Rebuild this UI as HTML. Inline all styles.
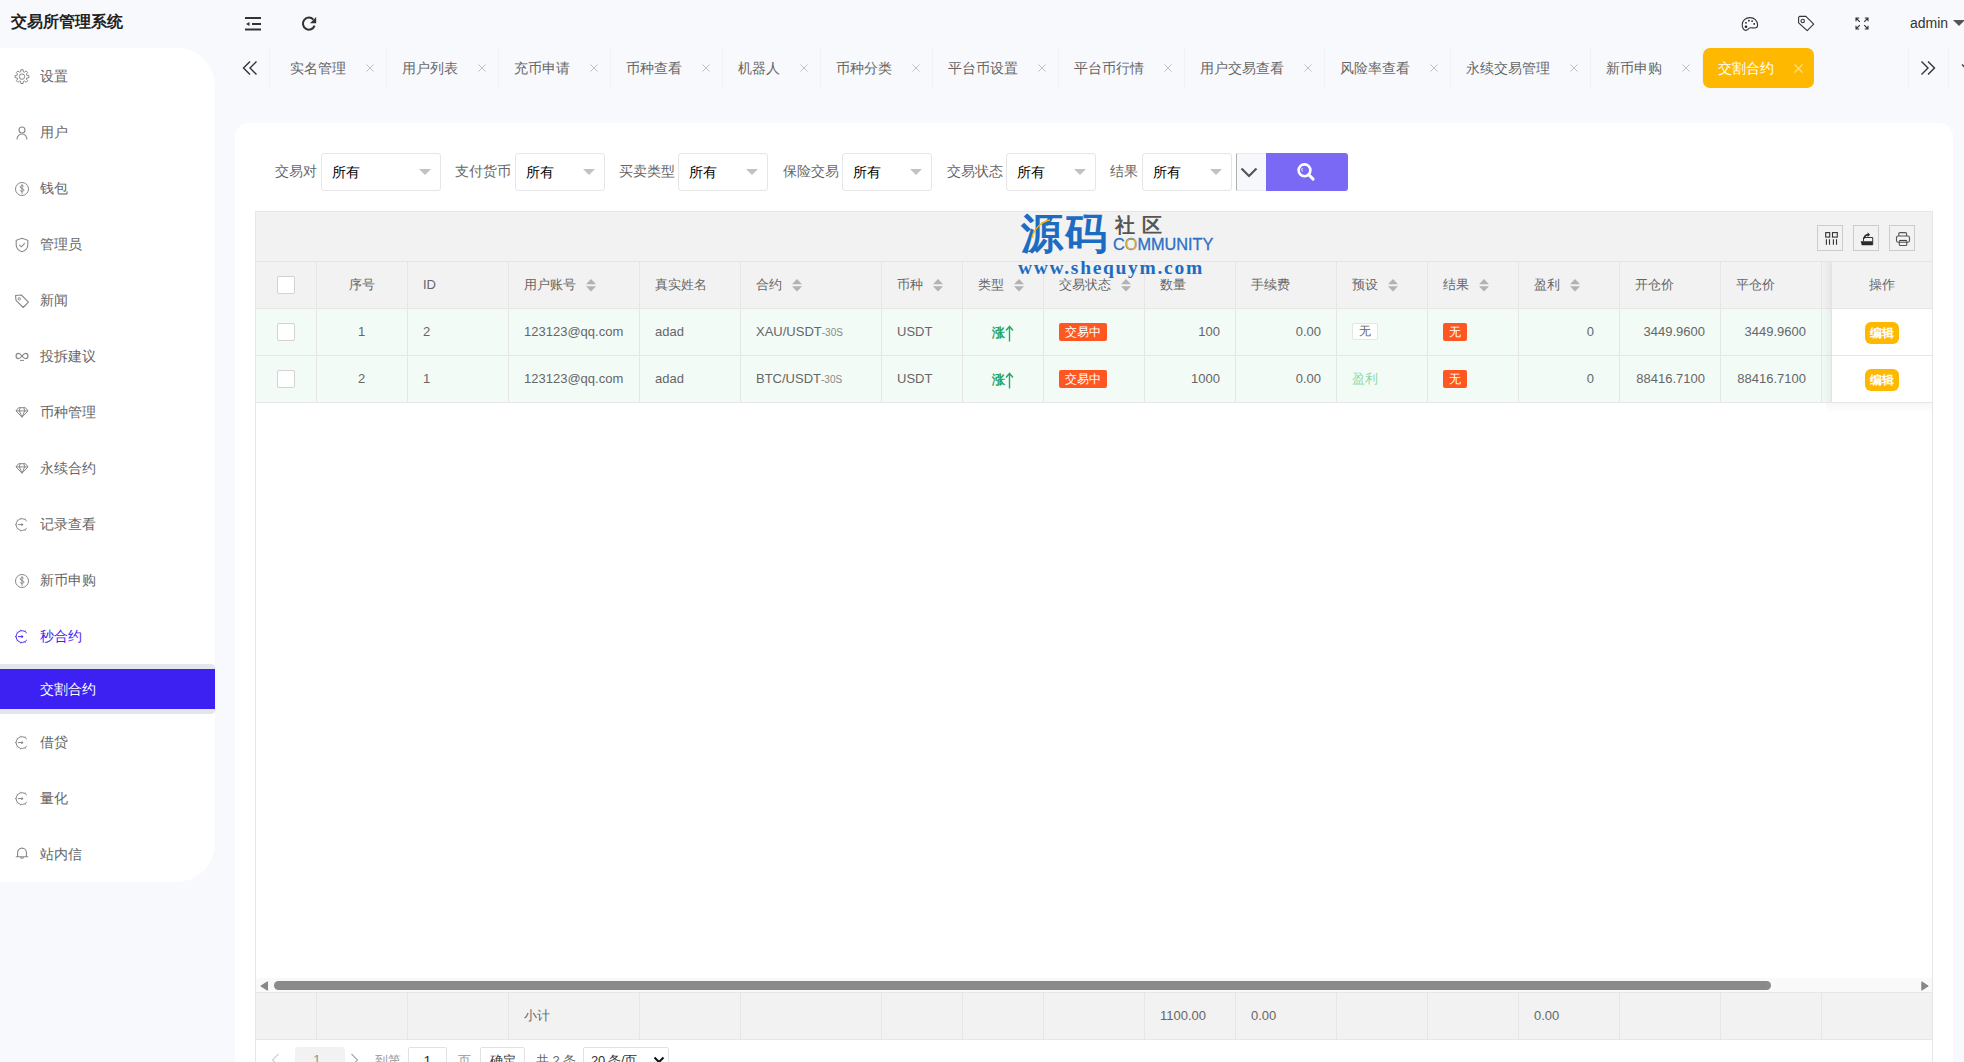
<!DOCTYPE html><html><head><meta charset="utf-8"><style>
*{margin:0;padding:0;box-sizing:border-box}
html,body{width:1964px;height:1062px;overflow:hidden;background:#f8f9fd;font-family:"Liberation Sans",sans-serif;font-size:14px;color:#666}
.a{position:absolute;white-space:nowrap}
#side{position:absolute;left:0;top:48px;width:215px;height:834px;background:#fff;border-radius:0 38px 38px 0}
.mi{position:absolute;left:40px;font-size:14px;color:#666;line-height:20px;white-space:nowrap}
.ic{position:absolute;left:13px}
.tab{position:absolute;top:58px;line-height:20px;color:#666;font-size:14px;white-space:nowrap}
.tx{position:absolute;top:64px}
.sep{position:absolute;top:48px;width:1px;height:40px;background:#f2f2f5}
#card{position:absolute;left:235px;top:123px;width:1718px;height:1000px;background:#fff;border-radius:14px}
.lbl{position:absolute;top:161px;line-height:20px;color:#666;white-space:nowrap}
.sel{position:absolute;top:153px;height:38px;border:1px solid #e6e6e6;border-radius:3px;background:#fff}
.sel span{position:absolute;left:10px;top:8px;line-height:20px;color:#000}
.sel i{position:absolute;top:15px;width:0;height:0;border-left:6px solid transparent;border-right:6px solid transparent;border-top:6px solid #c2c2c2}
.vl{position:absolute;width:1px;background:#e6e6e6}
.hl{position:absolute;height:1px;background:#e6e6e6}
.th{position:absolute;top:275px;line-height:20px;color:#666;white-space:nowrap;font-size:13px}
.td{position:absolute;line-height:22px;color:#666;white-space:nowrap;font-size:13px}
.srt{position:absolute;top:279px}
.cb{position:absolute;width:18px;height:18px;border:1px solid #d2d2d2;background:#fff;border-radius:2px}
.bdg{position:absolute;height:18px;line-height:18px;font-size:12px;color:#fff;background:#FF5722;border-radius:2px;text-align:center}
</style></head><body>
<div class="a" style="left:11px;top:12px;font-size:16px;font-weight:bold;color:#222;line-height:20px">交易所管理系统</div>
<svg class="a" style="left:244px;top:16px" width="18" height="16" viewBox="0 0 18 16"><path d="M1 2h16M8 8h9M1 13.5h16" stroke="#333" stroke-width="1.8"/><path d="M2 8l3.5-2v4z" fill="#333"/></svg>
<svg class="a" style="left:301px;top:16px" width="16" height="16" viewBox="0 0 16 16"><path d="M13.6 9.6A6 6 0 1 1 12.4 3.6" fill="none" stroke="#333" stroke-width="2"/><path d="M15.2 1v6.2H9z" fill="#333"/></svg>
<svg class="a" style="left:1741px;top:16px" width="18" height="16" viewBox="0 0 18 16"><path d="M9 1.6C4.6 1.6 1.2 4.8 1.2 8.8c0 3.4 1.8 5.6 3.6 5.6 1.8 0 2.4-1.8 3.8-2.4 1.4-.6 2.9 0 4.9 0 2.1 0 3.1-1 3.1-3C16.6 4.8 13.2 1.6 9 1.6z" fill="none" stroke="#333" stroke-width="1.1"/><circle cx="5" cy="10.8" r="1.3" fill="#222"/><circle cx="5" cy="6.8" r=".9" fill="#222"/><circle cx="7.9" cy="4.7" r=".9" fill="#222"/><circle cx="11.1" cy="5.05" r=".9" fill="#222"/><circle cx="13.2" cy="7.9" r=".9" fill="#222"/></svg>
<svg class="a" style="left:1797px;top:15px" width="18" height="18" viewBox="0 0 18 18"><path d="M1.6 2.4l1-1h6.3l7.8 7.8-6.5 6.5L1.6 7.9z" fill="none" stroke="#333" stroke-width="1.1" stroke-linejoin="round"/><circle cx="5.7" cy="6" r="1.7" fill="none" stroke="#333" stroke-width="1.1"/></svg>
<svg class="a" style="left:1855px;top:17px" width="14" height="13" viewBox="0 0 14 13"><g fill="none" stroke="#333" stroke-width="1.1"><path d="M1 1l3.8 3.8M1 4.2V1h3.2M13 1L9.2 4.8M9.8 1H13v3.2M1 12l3.8-3.8M1 8.8V12h3.2M13 12L9.2 8.2M13 8.8V12H9.8"/></g></svg>
<div class="a" style="left:1910px;top:14px;font-size:14px;color:#333;line-height:18px">admin</div>
<div class="a" style="left:1953px;top:20px;width:0;height:0;border-left:6px solid transparent;border-right:6px solid transparent;border-top:6px solid #555"></div>
<div id="side"></div>
<svg class="ic" style="top:68px" width="18" height="18" viewBox="0 0 18 18"><path d="M7.62 3.79 L7.90 1.69 L10.10 1.69 L10.38 3.79 L11.42 4.23 L13.11 2.94 L14.66 4.49 L13.37 6.18 L13.81 7.22 L15.91 7.50 L15.91 9.70 L13.81 9.98 L13.37 11.02 L14.66 12.71 L13.11 14.26 L11.42 12.97 L10.38 13.41 L10.10 15.51 L7.90 15.51 L7.62 13.41 L6.58 12.97 L4.89 14.26 L3.34 12.71 L4.63 11.02 L4.19 9.98 L2.09 9.70 L2.09 7.50 L4.19 7.22 L4.63 6.18 L3.34 4.49 L4.89 2.94 L6.58 4.23z" fill="none" stroke="#888" stroke-width="1" stroke-linejoin="round"/><circle cx="9" cy="8.6" r="2.7" fill="none" stroke="#888" stroke-width="1"/></svg>
<div class="mi" style="top:66px;color:#666">设置</div>
<svg class="ic" style="top:124px" width="18" height="18" viewBox="0 0 18 18"><circle cx="9" cy="6" r="3" fill="none" stroke="#888" stroke-width="1.1"/><path d="M4 15.5c0-3 2.2-5.5 5-5.5s5 2.5 5 5.5" fill="none" stroke="#888" stroke-width="1.1"/></svg>
<div class="mi" style="top:122px;color:#666">用户</div>
<svg class="ic" style="top:180px" width="18" height="18" viewBox="0 0 18 18"><circle cx="9" cy="9" r="6.5" fill="none" stroke="#888" stroke-width="1"/><path d="M10.8 6.6c-.3-.7-1-1-1.8-1-1 0-1.8.6-1.8 1.4 0 1.8 3.7 1 3.7 2.9 0 .9-.8 1.5-1.9 1.5-.9 0-1.7-.4-2-1.2M9 4.3v9.4" fill="none" stroke="#888" stroke-width="1"/></svg>
<div class="mi" style="top:178px;color:#666">钱包</div>
<svg class="ic" style="top:236px" width="18" height="18" viewBox="0 0 18 18"><path d="M9 2.3l5.8 2v4.6c0 3.4-2.6 5.6-5.8 6.8-3.2-1.2-5.8-3.4-5.8-6.8V4.3z" fill="none" stroke="#888" stroke-width="1.1"/><path d="M6.3 8.8l2 2 3.6-3.6" fill="none" stroke="#888" stroke-width="1.1"/></svg>
<div class="mi" style="top:234px;color:#666">管理员</div>
<svg class="ic" style="top:292px" width="18" height="18" viewBox="0 0 18 18"><path d="M2.5 3.5l5.8-.5 7.2 7.2-5.3 5.3-7.2-7.2z" fill="none" stroke="#888" stroke-width="1.1" stroke-linejoin="round"/><circle cx="6.3" cy="6.8" r="1.2" fill="none" stroke="#888" stroke-width="1"/></svg>
<div class="mi" style="top:290px;color:#666">新闻</div>
<svg class="ic" style="top:348px" width="18" height="18" viewBox="0 0 18 18"><path d="M9 8C7.8 6.5 6.8 5.3 5.5 5.3 4.1 5.3 3.1 6.5 3.1 8s1 2.7 2.4 2.7c1.3 0 2.3-1.2 3.5-2.7 1.2-1.5 2.2-2.7 3.5-2.7 1.4 0 2.4 1.2 2.4 2.7s-1 2.7-2.4 2.7C11.2 10.7 10.2 9.5 9 8z" fill="none" stroke="#888" stroke-width="1.2"/><path d="M7 12.4h4" stroke="#888" stroke-width="1"/></svg>
<div class="mi" style="top:346px;color:#666">投拆建议</div>
<svg class="ic" style="top:404px" width="18" height="18" viewBox="0 0 18 18"><path d="M5.6 3.7h6.8l2.6 3.2-6 6.3-6-6.3z M3 6.9h12M7.2 3.7L6.3 6.9 9 13.2l2.7-6.3-.9-3.2" fill="none" stroke="#888" stroke-width="1" stroke-linejoin="round"/></svg>
<div class="mi" style="top:402px;color:#666">币种管理</div>
<svg class="ic" style="top:460px" width="18" height="18" viewBox="0 0 18 18"><path d="M5.6 3.7h6.8l2.6 3.2-6 6.3-6-6.3z M3 6.9h12M7.2 3.7L6.3 6.9 9 13.2l2.7-6.3-.9-3.2" fill="none" stroke="#888" stroke-width="1" stroke-linejoin="round"/></svg>
<div class="mi" style="top:458px;color:#666">永续合约</div>
<svg class="ic" style="top:516px" width="18" height="18" viewBox="0 0 18 18"><path d="M13.83 5.22A5.9 5.9 0 1 0 13.83 11.98" fill="none" stroke="#888" stroke-width="1"/><path d="M11.95 3.49L12.45 2.62M7.98 2.79L7.80 1.80M4.48 4.81L3.71 4.16M3.10 8.60L2.10 8.60M4.48 12.39L3.71 13.04M7.98 14.41L7.80 15.40M11.95 13.71L12.45 14.58" stroke="#888" stroke-width="1"/><circle cx="9" cy="8.6" r="1.2" fill="#888"/><path d="M4.9 8.6H9" stroke="#888" stroke-width="1"/></svg>
<div class="mi" style="top:514px;color:#666">记录查看</div>
<svg class="ic" style="top:572px" width="18" height="18" viewBox="0 0 18 18"><circle cx="9" cy="9" r="6.5" fill="none" stroke="#888" stroke-width="1"/><path d="M10.8 6.6c-.3-.7-1-1-1.8-1-1 0-1.8.6-1.8 1.4 0 1.8 3.7 1 3.7 2.9 0 .9-.8 1.5-1.9 1.5-.9 0-1.7-.4-2-1.2M9 4.3v9.4" fill="none" stroke="#888" stroke-width="1"/></svg>
<div class="mi" style="top:570px;color:#666">新币申购</div>
<svg class="ic" style="top:628px" width="18" height="18" viewBox="0 0 18 18"><path d="M13.83 5.22A5.9 5.9 0 1 0 13.83 11.98" fill="none" stroke="#4a2ef2" stroke-width="1"/><path d="M11.95 3.49L12.45 2.62M7.98 2.79L7.80 1.80M4.48 4.81L3.71 4.16M3.10 8.60L2.10 8.60M4.48 12.39L3.71 13.04M7.98 14.41L7.80 15.40M11.95 13.71L12.45 14.58" stroke="#4a2ef2" stroke-width="1"/><circle cx="9" cy="8.6" r="1.2" fill="#4a2ef2"/><path d="M4.9 8.6H9" stroke="#4a2ef2" stroke-width="1"/></svg>
<div class="mi" style="top:626px;color:#4326f0">秒合约</div>
<svg class="ic" style="top:734px" width="18" height="18" viewBox="0 0 18 18"><path d="M13.83 5.22A5.9 5.9 0 1 0 13.83 11.98" fill="none" stroke="#888" stroke-width="1"/><path d="M11.95 3.49L12.45 2.62M7.98 2.79L7.80 1.80M4.48 4.81L3.71 4.16M3.10 8.60L2.10 8.60M4.48 12.39L3.71 13.04M7.98 14.41L7.80 15.40M11.95 13.71L12.45 14.58" stroke="#888" stroke-width="1"/><circle cx="9" cy="8.6" r="1.2" fill="#888"/><path d="M4.9 8.6H9" stroke="#888" stroke-width="1"/></svg>
<div class="mi" style="top:732px;color:#666">借贷</div>
<svg class="ic" style="top:790px" width="18" height="18" viewBox="0 0 18 18"><path d="M13.83 5.22A5.9 5.9 0 1 0 13.83 11.98" fill="none" stroke="#888" stroke-width="1"/><path d="M11.95 3.49L12.45 2.62M7.98 2.79L7.80 1.80M4.48 4.81L3.71 4.16M3.10 8.60L2.10 8.60M4.48 12.39L3.71 13.04M7.98 14.41L7.80 15.40M11.95 13.71L12.45 14.58" stroke="#888" stroke-width="1"/><circle cx="9" cy="8.6" r="1.2" fill="#888"/><path d="M4.9 8.6H9" stroke="#888" stroke-width="1"/></svg>
<div class="mi" style="top:788px;color:#666">量化</div>
<svg class="ic" style="top:846px" width="18" height="18" viewBox="0 0 18 18"><path d="M4.6 10.7V6.5c0-2.5 2-4.3 4.4-4.3s4.4 1.8 4.4 4.3v4.2M2.8 10.8h12.4M7.6 10.9a1.4 1.4 0 0 0 2.8 0M9 1.2v1" fill="none" stroke="#888" stroke-width="1.1"/></svg>
<div class="mi" style="top:844px;color:#666">站内信</div>
<div class="a" style="left:0;top:664px;width:215px;height:50px;background:#e3e6ed;border-radius:0 4px 4px 0"></div>
<div class="a" style="left:0;top:669px;width:215px;height:40px;background:#3d20f2"></div>
<div class="mi" style="top:679px;color:#fff">交割合约</div>
<svg class="a" style="left:242px;top:60px" width="16" height="16" viewBox="0 0 16 16"><path d="M8 1.5L1.5 8 8 14.5M14.5 1.5L8 8l6.5 6.5" fill="none" stroke="#333" stroke-width="1.4"/></svg>
<div class="sep" style="left:269px"></div>
<div class="tab" style="left:290px">实名管理</div>
<svg class="tx" style="left:366px" width="8" height="8" viewBox="0 0 8 8"><path d="M.4.4l7.2 7.2M7.6.4L.4 7.6" stroke="#c0c0c0" stroke-width="1"/></svg>
<div class="sep" style="left:386px"></div>
<div class="tab" style="left:402px">用户列表</div>
<svg class="tx" style="left:478px" width="8" height="8" viewBox="0 0 8 8"><path d="M.4.4l7.2 7.2M7.6.4L.4 7.6" stroke="#c0c0c0" stroke-width="1"/></svg>
<div class="sep" style="left:498px"></div>
<div class="tab" style="left:514px">充币申请</div>
<svg class="tx" style="left:590px" width="8" height="8" viewBox="0 0 8 8"><path d="M.4.4l7.2 7.2M7.6.4L.4 7.6" stroke="#c0c0c0" stroke-width="1"/></svg>
<div class="sep" style="left:610px"></div>
<div class="tab" style="left:626px">币种查看</div>
<svg class="tx" style="left:702px" width="8" height="8" viewBox="0 0 8 8"><path d="M.4.4l7.2 7.2M7.6.4L.4 7.6" stroke="#c0c0c0" stroke-width="1"/></svg>
<div class="sep" style="left:722px"></div>
<div class="tab" style="left:738px">机器人</div>
<svg class="tx" style="left:800px" width="8" height="8" viewBox="0 0 8 8"><path d="M.4.4l7.2 7.2M7.6.4L.4 7.6" stroke="#c0c0c0" stroke-width="1"/></svg>
<div class="sep" style="left:820px"></div>
<div class="tab" style="left:836px">币种分类</div>
<svg class="tx" style="left:912px" width="8" height="8" viewBox="0 0 8 8"><path d="M.4.4l7.2 7.2M7.6.4L.4 7.6" stroke="#c0c0c0" stroke-width="1"/></svg>
<div class="sep" style="left:932px"></div>
<div class="tab" style="left:948px">平台币设置</div>
<svg class="tx" style="left:1038px" width="8" height="8" viewBox="0 0 8 8"><path d="M.4.4l7.2 7.2M7.6.4L.4 7.6" stroke="#c0c0c0" stroke-width="1"/></svg>
<div class="sep" style="left:1058px"></div>
<div class="tab" style="left:1074px">平台币行情</div>
<svg class="tx" style="left:1164px" width="8" height="8" viewBox="0 0 8 8"><path d="M.4.4l7.2 7.2M7.6.4L.4 7.6" stroke="#c0c0c0" stroke-width="1"/></svg>
<div class="sep" style="left:1184px"></div>
<div class="tab" style="left:1200px">用户交易查看</div>
<svg class="tx" style="left:1304px" width="8" height="8" viewBox="0 0 8 8"><path d="M.4.4l7.2 7.2M7.6.4L.4 7.6" stroke="#c0c0c0" stroke-width="1"/></svg>
<div class="sep" style="left:1324px"></div>
<div class="tab" style="left:1340px">风险率查看</div>
<svg class="tx" style="left:1430px" width="8" height="8" viewBox="0 0 8 8"><path d="M.4.4l7.2 7.2M7.6.4L.4 7.6" stroke="#c0c0c0" stroke-width="1"/></svg>
<div class="sep" style="left:1450px"></div>
<div class="tab" style="left:1466px">永续交易管理</div>
<svg class="tx" style="left:1570px" width="8" height="8" viewBox="0 0 8 8"><path d="M.4.4l7.2 7.2M7.6.4L.4 7.6" stroke="#c0c0c0" stroke-width="1"/></svg>
<div class="sep" style="left:1590px"></div>
<div class="tab" style="left:1606px">新币申购</div>
<svg class="tx" style="left:1682px" width="8" height="8" viewBox="0 0 8 8"><path d="M.4.4l7.2 7.2M7.6.4L.4 7.6" stroke="#c0c0c0" stroke-width="1"/></svg>
<div class="sep" style="left:1702px"></div>
<div class="a" style="left:1703px;top:48px;width:111px;height:40px;background:#FFB800;border-radius:7px"></div>
<div class="tab" style="left:1718px;color:#fff">交割合约</div>
<svg class="tx" style="left:1794px;top:64px" width="9" height="9" viewBox="0 0 9 9"><path d="M.5.5l8 8M8.5.5l-8 8" stroke="#ffe08a" stroke-width="1.1"/></svg>
<div class="sep" style="left:1908px"></div>
<svg class="a" style="left:1920px;top:60px" width="16" height="16" viewBox="0 0 16 16"><path d="M8 1.5L14.5 8 8 14.5M1.5 1.5L8 8l-6.5 6.5" fill="none" stroke="#333" stroke-width="1.4"/></svg>
<div class="sep" style="left:1948px"></div>
<svg class="a" style="left:1960.5px;top:63px" width="10" height="8" viewBox="0 0 10 8"><path d="M1 1.5l4 4 4-4" fill="none" stroke="#333" stroke-width="1.3"/></svg>
<div id="card"></div>
<div class="lbl" style="left:275px">交易对</div>
<div class="sel" style="left:321px;width:120px"><span>所有</span><i style="left:97px"></i></div>
<div class="lbl" style="left:455px">支付货币</div>
<div class="sel" style="left:515px;width:90px"><span>所有</span><i style="left:67px"></i></div>
<div class="lbl" style="left:619px">买卖类型</div>
<div class="sel" style="left:678px;width:90px"><span>所有</span><i style="left:67px"></i></div>
<div class="lbl" style="left:783px">保险交易</div>
<div class="sel" style="left:842px;width:90px"><span>所有</span><i style="left:67px"></i></div>
<div class="lbl" style="left:947px">交易状态</div>
<div class="sel" style="left:1006px;width:90px"><span>所有</span><i style="left:67px"></i></div>
<div class="lbl" style="left:1110px">结果</div>
<div class="sel" style="left:1142px;width:90px"><span>所有</span><i style="left:67px"></i></div>
<div class="a" style="left:1236px;top:153px;width:31px;height:38px;background:#f7f8fc;border:1px solid #e8ebee;border-left:1px solid #b0b0b0"></div>
<svg class="a" style="left:1240px;top:167px" width="18" height="12" viewBox="0 0 18 12"><path d="M1.5 1.5L9 9l7.5-7.5" fill="none" stroke="#555" stroke-width="2.2"/></svg>
<div class="a" style="left:1266px;top:153px;width:82px;height:38px;background:#7a69f5;border-radius:0 3px 3px 0"></div>
<svg class="a" style="left:1296px;top:162px" width="20" height="20" viewBox="0 0 20 20"><circle cx="8.5" cy="8.3" r="5.9" fill="none" stroke="#fff" stroke-width="2.6"/><path d="M12.8 12.8l4.3 4.3" stroke="#fff" stroke-width="3" stroke-linecap="round"/><path d="M6.5 6c-.8.8-.8 2.4 0 3.4" fill="none" stroke="#fff" stroke-width="1"/></svg>
<div class="a" style="left:255px;top:211px;width:1678px;height:50px;background:#f2f2f2"></div>
<div class="a" style="left:255px;top:262px;width:1678px;height:46px;background:#f2f2f2"></div>
<div class="a" style="left:255px;top:309px;width:1678px;height:93px;background:#f3fbf7"></div>
<div class="a" style="left:1817px;top:225px;width:26px;height:26px;border:1px solid #ccc"></div>
<div class="a" style="left:1853px;top:225px;width:26px;height:26px;border:1px solid #ccc"></div>
<div class="a" style="left:1889px;top:225px;width:26px;height:26px;border:1px solid #ccc"></div>
<svg class="a" style="left:1823px;top:231px" width="16" height="16" viewBox="0 0 16 16"><g fill="none" stroke="#333" stroke-width="1.1"><rect x="2.7" y="1.6" width="4" height="4.5"/><rect x="9.5" y="1.6" width="4.8" height="4.5"/></g><path d="M3.4 8.3v5.4M6.5 8.3v5.4M10.4 8.3v5.4M13.5 8.3v5.4" stroke="#333" stroke-width="1.1"/></svg>
<svg class="a" style="left:1859px;top:231px" width="16" height="16" viewBox="0 0 16 16"><path d="M1.7 10.2h12v4H2.8z" fill="#2a2a2a"/><path d="M4.5 10.2V6.5h9.2v7.5" fill="none" stroke="#333" stroke-width="1"/><path d="M5.4 7.5c0-2.5 1.4-3.8 3.6-3.8" fill="none" stroke="#222" stroke-width="1.5"/><path d="M8.6 1.2l2.4 2.5-2.4 2.3z" fill="#222"/></svg>
<svg class="a" style="left:1895px;top:231px" width="16" height="16" viewBox="0 0 16 16"><g fill="none" stroke="#555" stroke-width="1.1"><path d="M3.8 5V2.8c0-.8.4-1.2 1.2-1.2h5.4c.8 0 1.2.4 1.2 1.2V5"/><rect x="1.5" y="5" width="13" height="6.3" rx="1.8"/><rect x="4.3" y="9.5" width="7.5" height="5" rx="1"/></g><path d="M4.5 9.5h7" stroke="#444" stroke-width="1.2"/></svg>
<div class="hl" style="left:255px;top:211px;width:1678px"></div>
<div class="hl" style="left:255px;top:261px;width:1678px"></div>
<div class="hl" style="left:255px;top:308px;width:1678px"></div>
<div class="hl" style="left:255px;top:355px;width:1678px"></div>
<div class="hl" style="left:255px;top:402px;width:1678px"></div>
<div class="vl" style="left:255px;top:211px;height:851px"></div>
<div class="vl" style="left:1932px;top:211px;height:851px"></div>
<div class="vl" style="left:316px;top:262px;height:140px"></div>
<div class="vl" style="left:407px;top:262px;height:140px"></div>
<div class="vl" style="left:508px;top:262px;height:140px"></div>
<div class="vl" style="left:639px;top:262px;height:140px"></div>
<div class="vl" style="left:740px;top:262px;height:140px"></div>
<div class="vl" style="left:881px;top:262px;height:140px"></div>
<div class="vl" style="left:962px;top:262px;height:140px"></div>
<div class="vl" style="left:1043px;top:262px;height:140px"></div>
<div class="vl" style="left:1144px;top:262px;height:140px"></div>
<div class="vl" style="left:1235px;top:262px;height:140px"></div>
<div class="vl" style="left:1336px;top:262px;height:140px"></div>
<div class="vl" style="left:1427px;top:262px;height:140px"></div>
<div class="vl" style="left:1518px;top:262px;height:140px"></div>
<div class="vl" style="left:1619px;top:262px;height:140px"></div>
<div class="vl" style="left:1720px;top:262px;height:140px"></div>
<div class="vl" style="left:1821px;top:262px;height:140px"></div>
<div class="a" style="left:1822px;top:262px;width:10px;height:140px;background:linear-gradient(to right,rgba(0,0,0,0),rgba(0,0,0,0.05))"></div>
<div class="a" style="left:1826px;top:403px;width:106px;height:10px;background:linear-gradient(to bottom,rgba(0,0,0,0.03),rgba(0,0,0,0))"></div>
<div class="a" style="left:1832px;top:262px;width:100px;height:46px;background:#f2f2f2"></div>
<div class="a" style="left:1832px;top:309px;width:100px;height:93px;background:#fff"></div>
<div class="hl" style="left:1832px;top:355px;width:100px"></div>
<div class="hl" style="left:1822px;top:402px;width:110px"></div>
<div class="vl" style="left:1831px;top:262px;height:140px;background:#e2e2e2"></div>
<div class="th" style="left:349px">序号</div>
<div class="th" style="left:423px">ID</div>
<div class="th" style="left:524px">用户账号</div>
<svg class="srt" style="left:586px" width="10" height="13" viewBox="0 0 10 13"><path d="M5 0L10 5.3H0z M5 12.5L0 7.2h10z" fill="#b2b2b2"/></svg>
<div class="th" style="left:655px">真实姓名</div>
<div class="th" style="left:756px">合约</div>
<svg class="srt" style="left:792px" width="10" height="13" viewBox="0 0 10 13"><path d="M5 0L10 5.3H0z M5 12.5L0 7.2h10z" fill="#b2b2b2"/></svg>
<div class="th" style="left:897px">币种</div>
<svg class="srt" style="left:933px" width="10" height="13" viewBox="0 0 10 13"><path d="M5 0L10 5.3H0z M5 12.5L0 7.2h10z" fill="#b2b2b2"/></svg>
<div class="th" style="left:978px">类型</div>
<svg class="srt" style="left:1014px" width="10" height="13" viewBox="0 0 10 13"><path d="M5 0L10 5.3H0z M5 12.5L0 7.2h10z" fill="#b2b2b2"/></svg>
<div class="th" style="left:1059px">交易状态</div>
<svg class="srt" style="left:1121px" width="10" height="13" viewBox="0 0 10 13"><path d="M5 0L10 5.3H0z M5 12.5L0 7.2h10z" fill="#b2b2b2"/></svg>
<div class="th" style="left:1160px">数量</div>
<div class="th" style="left:1251px">手续费</div>
<div class="th" style="left:1352px">预设</div>
<svg class="srt" style="left:1388px" width="10" height="13" viewBox="0 0 10 13"><path d="M5 0L10 5.3H0z M5 12.5L0 7.2h10z" fill="#b2b2b2"/></svg>
<div class="th" style="left:1443px">结果</div>
<svg class="srt" style="left:1479px" width="10" height="13" viewBox="0 0 10 13"><path d="M5 0L10 5.3H0z M5 12.5L0 7.2h10z" fill="#b2b2b2"/></svg>
<div class="th" style="left:1534px">盈利</div>
<svg class="srt" style="left:1570px" width="10" height="13" viewBox="0 0 10 13"><path d="M5 0L10 5.3H0z M5 12.5L0 7.2h10z" fill="#b2b2b2"/></svg>
<div class="th" style="left:1635px">开仓价</div>
<div class="th" style="left:1736px">平仓价</div>
<div class="th" style="left:1869px">操作</div>
<div class="cb" style="left:277px;top:276px"></div>
<div class="cb" style="left:277px;top:323px"></div>
<div class="td" style="left:316px;width:91px;text-align:center;top:321px">1</div>
<div class="td" style="left:423px;top:321px">2</div>
<div class="td" style="left:524px;top:321px">123123@qq.com</div>
<div class="td" style="left:655px;top:321px">adad</div>
<div class="td" style="left:756px;top:321px">XAU/USDT<span style="font-size:10px;color:#888">-30S</span></div>
<div class="td" style="left:897px;top:321px">USDT</div>
<div class="td" style="left:992px;top:322px;color:#2aa563;font-weight:bold">涨</div>
<svg class="a" style="left:1005px;top:325px" width="9" height="17" viewBox="0 0 9 17"><path d="M4.5 1.5v15M1 5.5l3.5-4.2L8 5.5" fill="none" stroke="#2aa563" stroke-width="1.4"/></svg>
<div class="bdg" style="left:1059px;top:323px;width:48px">交易中</div>
<div class="td" style="left:1144px;width:76px;text-align:right;top:321px">100</div>
<div class="td" style="left:1235px;width:86px;text-align:right;top:321px">0.00</div>
<div class="bdg" style="left:1352px;top:323px;width:26px;height:17px;line-height:15px;background:#fff;color:#666;border:1px solid #e6e6e6">无</div>
<div class="bdg" style="left:1443px;top:323px;width:24px">无</div>
<div class="td" style="left:1518px;width:76px;text-align:right;top:321px">0</div>
<div class="td" style="left:1619px;width:86px;text-align:right;top:321px">3449.9600</div>
<div class="td" style="left:1720px;width:86px;text-align:right;top:321px">3449.9600</div>
<div class="bdg" style="left:1865px;top:322px;width:34px;height:22px;line-height:22px;background:#FFB800;border-radius:6px;font-weight:bold">编辑</div>
<div class="cb" style="left:277px;top:370px"></div>
<div class="td" style="left:316px;width:91px;text-align:center;top:368px">2</div>
<div class="td" style="left:423px;top:368px">1</div>
<div class="td" style="left:524px;top:368px">123123@qq.com</div>
<div class="td" style="left:655px;top:368px">adad</div>
<div class="td" style="left:756px;top:368px">BTC/USDT<span style="font-size:10px;color:#888">-30S</span></div>
<div class="td" style="left:897px;top:368px">USDT</div>
<div class="td" style="left:992px;top:369px;color:#2aa563;font-weight:bold">涨</div>
<svg class="a" style="left:1005px;top:372px" width="9" height="17" viewBox="0 0 9 17"><path d="M4.5 1.5v15M1 5.5l3.5-4.2L8 5.5" fill="none" stroke="#2aa563" stroke-width="1.4"/></svg>
<div class="bdg" style="left:1059px;top:370px;width:48px">交易中</div>
<div class="td" style="left:1144px;width:76px;text-align:right;top:368px">1000</div>
<div class="td" style="left:1235px;width:86px;text-align:right;top:368px">0.00</div>
<div class="td" style="left:1352px;top:368px;color:#8fd8a9">盈利</div>
<div class="bdg" style="left:1443px;top:370px;width:24px">无</div>
<div class="td" style="left:1518px;width:76px;text-align:right;top:368px">0</div>
<div class="td" style="left:1619px;width:86px;text-align:right;top:368px">88416.7100</div>
<div class="td" style="left:1720px;width:86px;text-align:right;top:368px">88416.7100</div>
<div class="bdg" style="left:1865px;top:369px;width:34px;height:22px;line-height:22px;background:#FFB800;border-radius:6px;font-weight:bold">编辑</div>
<div class="a" style="left:1021px;top:206px;font-size:42px;line-height:56px;font-weight:bold;color:#1c6cc2;letter-spacing:2px">源码</div>
<svg class="a" style="left:1030px;top:218px" width="30" height="22" viewBox="0 0 30 22"><path d="M2 20C3 12 12 3 20 2" fill="none" stroke="#f5b400" stroke-width="1.4"/></svg>
<div class="a" style="left:1115px;top:209px;font-size:19.5px;line-height:32px;font-weight:900;color:#555;letter-spacing:7px">社区</div>
<div class="a" style="left:1113px;top:233px;font-size:16.3px;-webkit-text-stroke:0.3px #2c70c4;line-height:22px;color:#2c70c4">C<span style="color:#f5b000">O</span>MMUNITY</div>
<div class="a" style="left:1018px;top:256px;font-family:'Liberation Serif',serif;font-size:19.5px;line-height:24px;font-weight:bold;color:#1c6cc2;letter-spacing:1.7px">www.shequym.com</div>
<div class="a" style="left:256px;top:978px;width:1676px;height:14px;background:#f9f9f9"></div>
<div class="a" style="left:274px;top:981px;width:1497px;height:9px;background:#8a8a8a;border-radius:5px"></div>
<svg class="a" style="left:260px;top:981px" width="8" height="10" viewBox="0 0 8 10"><path d="M7.5 0.8v8.4L.8 5z" fill="#888" stroke="#888" stroke-width="1" stroke-linejoin="round"/></svg>
<svg class="a" style="left:1921px;top:981px" width="8" height="10" viewBox="0 0 8 10"><path d="M.8 0.8v8.4L7.2 5z" fill="#888" stroke="#888" stroke-width="1" stroke-linejoin="round"/></svg>
<div class="a" style="left:255px;top:992px;width:1678px;height:47px;background:#f2f2f2"></div>
<div class="hl" style="left:255px;top:992px;width:1678px"></div>
<div class="hl" style="left:255px;top:1039px;width:1678px"></div>
<div class="vl" style="left:316px;top:992px;height:47px"></div>
<div class="vl" style="left:407px;top:992px;height:47px"></div>
<div class="vl" style="left:508px;top:992px;height:47px"></div>
<div class="vl" style="left:639px;top:992px;height:47px"></div>
<div class="vl" style="left:740px;top:992px;height:47px"></div>
<div class="vl" style="left:881px;top:992px;height:47px"></div>
<div class="vl" style="left:962px;top:992px;height:47px"></div>
<div class="vl" style="left:1043px;top:992px;height:47px"></div>
<div class="vl" style="left:1144px;top:992px;height:47px"></div>
<div class="vl" style="left:1235px;top:992px;height:47px"></div>
<div class="vl" style="left:1336px;top:992px;height:47px"></div>
<div class="vl" style="left:1427px;top:992px;height:47px"></div>
<div class="vl" style="left:1518px;top:992px;height:47px"></div>
<div class="vl" style="left:1619px;top:992px;height:47px"></div>
<div class="vl" style="left:1720px;top:992px;height:47px"></div>
<div class="vl" style="left:1821px;top:992px;height:47px"></div>
<div class="vl" style="left:255px;top:992px;height:70px"></div>
<div class="vl" style="left:1932px;top:992px;height:70px"></div>
<div class="td" style="left:524px;top:1005px">小计</div>
<div class="td" style="left:1160px;top:1005px">1100.00</div>
<div class="td" style="left:1251px;top:1005px">0.00</div>
<div class="td" style="left:1534px;top:1005px">0.00</div>
<svg class="a" style="left:271px;top:1053px" width="9" height="14" viewBox="0 0 9 14"><path d="M7.5 1L1.5 7l6 6" fill="none" stroke="#d2d2d2" stroke-width="1.2"/></svg>
<div class="a" style="left:295px;top:1047px;width:50px;height:30px;background:#f2f2f2;border-radius:4px;text-align:left;padding-left:18px;line-height:26px;color:#999">1</div>
<svg class="a" style="left:350px;top:1053px" width="9" height="14" viewBox="0 0 9 14"><path d="M1.5 1l6 6-6 6" fill="none" stroke="#aaa" stroke-width="1.2"/></svg>
<div class="td" style="left:375px;top:1050px;font-size:13px;color:#999">到第</div>
<div class="a" style="left:408px;top:1047px;width:39px;height:30px;border:1px solid #e2e2e2;border-radius:2px;text-align:center;line-height:26px;color:#333">1</div>
<div class="td" style="left:458px;top:1050px;font-size:13px;color:#999">页</div>
<div class="a" style="left:480px;top:1047px;width:45px;height:30px;border:1px solid #e2e2e2;border-radius:2px;text-align:center;line-height:26px;color:#333;font-size:13px">确定</div>
<div class="td" style="left:536px;top:1050px;font-size:13px;color:#666">共 2 条</div>
<div class="a" style="left:583px;top:1047px;width:86px;height:30px;border:1px solid #e2e2e2;border-radius:2px;line-height:26px;color:#333;font-size:13px;padding-left:7px;letter-spacing:-0.3px">20 条/页</div>
<svg class="a" style="left:653px;top:1056px" width="12" height="8" viewBox="0 0 12 8"><path d="M1.5 1.5l4.5 4.5 4.5-4.5" fill="none" stroke="#111" stroke-width="2"/></svg>
</body></html>
